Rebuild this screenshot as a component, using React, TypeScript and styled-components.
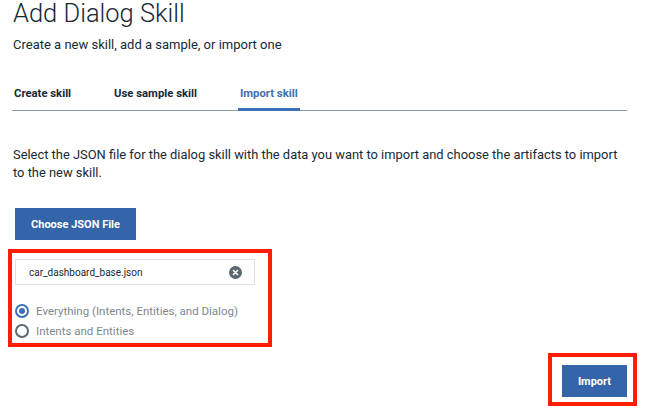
import React, { useState } from "react";
import styled, { createGlobalStyle } from "styled-components";

const Global = createGlobalStyle`
  html, body { margin: 0; padding: 0; background: #ffffff; }
  body { font-family: Roboto, "Liberation Sans", Arial, sans-serif; color: #152935; }
  * { box-sizing: border-box; }
`;

const Page = styled.div`
  width: 651px;
  padding: 0 14px 0 12px;
  display: flex;
  flex-direction: column;
`;

const Title = styled.h1`
  margin: 0 0 0 1px;
  font-size: 25.5px;
  line-height: 26px;
  font-weight: 300;
  color: #152935;
`;

const Subtitle = styled.p`
  margin: 10px 0 0 1px;
  font-size: 13px;
  line-height: 18px;
  color: #152935;
`;

const TabList = styled.div`
  margin: 32px 10px 0 0;
  display: flex;
  gap: 39px;
  box-shadow: inset 0 -1px 0 #8c9ba5;
`;

const Tab = styled.button<{ $active?: boolean }>`
  all: unset;
  cursor: pointer;
  padding: 0 2px 6px;
  font-size: 11.3px;
  line-height: 16px;
  font-weight: 700;
  color: ${(p) => (p.$active ? "#3d70b2" : "#152935")};
  border-bottom: 3px solid ${(p) => (p.$active ? "#3d70b2" : "transparent")};
`;

const Paragraph = styled.p`
  margin: 35px 10px 0 1px;
  font-size: 12.9px;
  line-height: 18px;
  color: #152935;
`;

const PrimaryButton = styled.button<{ $w: number }>`
  all: unset;
  cursor: pointer;
  width: ${(p) => p.$w}px;
  height: 32px;
  display: flex;
  align-items: center;
  justify-content: center;
  background: #3465a8;
  color: #ffffff;
  font-size: 11px;
  font-weight: 700;
`;

const ChooseRow = styled.div`
  margin: 26px 0 0 3px;
  display: flex;
`;

const Highlight = styled.div`
  border: 4px solid #ff1f00;
`;

const FileBox = styled(Highlight)`
  margin: 9px 0 0 -4px;
  width: 264px;
  padding: 6px 0 2px 3px;
  display: flex;
  flex-direction: column;
`;

const FileField = styled.div`
  width: 240px;
  height: 26px;
  border: 1px solid #dfe3e6;
  display: flex;
  align-items: center;
  justify-content: space-between;
  padding: 0 12px 0 13px;
  font-size: 10px;
  color: #152935;
`;

const ClearIcon = styled.svg`
  width: 13px;
  height: 13px;
  display: block;
`;

const RadioGroup = styled.div`
  margin-top: 16px;
  display: flex;
  flex-direction: column;
`;

const RadioRow = styled.label`
  height: 20px;
  display: flex;
  align-items: center;
  gap: 7px;
  font-size: 11.5px;
  color: #7d8890;
  cursor: pointer;
`;

const RadioInput = styled.input`
  appearance: none;
  margin: 0;
  width: 14px;
  height: 14px;
  border-radius: 50%;
  border: 2px solid #5a6872;
  display: grid;
  place-items: center;
  &:checked {
    border-color: #3d70b2;
  }
  &:checked::after {
    content: "";
    width: 6px;
    height: 6px;
    border-radius: 50%;
    background: #3d70b2;
  }
`;

const Footer = styled.div`
  margin-top: 6px;
  display: flex;
  justify-content: flex-end;
`;

const ImportBox = styled(Highlight)`
  padding: 8px 6px 5px 10px;
`;

export default function App() {
  const [choice, setChoice] = useState("all");
  return (
    <Page>
      <Global />
      <Title>Add Dialog Skill</Title>
      <Subtitle>Create a new skill, add a sample, or import one</Subtitle>
      <TabList>
        <Tab>Create skill</Tab>
        <Tab>Use sample skill</Tab>
        <Tab $active>Import skill</Tab>
      </TabList>
      <Paragraph>
        Select the JSON file for the dialog skill with the data you want to import and choose the artifacts to import
        to the new skill.
      </Paragraph>
      <ChooseRow>
        <PrimaryButton $w={121}>Choose JSON File</PrimaryButton>
      </ChooseRow>
      <FileBox>
        <FileField>
          <span>car_dashboard_base.json</span>
          <ClearIcon viewBox="0 0 16 16">
            <circle cx="8" cy="8" r="8" fill="#5a6872" />
            <path d="M5.5 5.5l5 5M10.5 5.5l-5 5" stroke="#ffffff" strokeWidth="2" strokeLinecap="round" />
          </ClearIcon>
        </FileField>
        <RadioGroup>
          <RadioRow>
            <RadioInput type="radio" name="what" checked={choice === "all"} onChange={() => setChoice("all")} />
            Everything (Intents, Entities, and Dialog)
          </RadioRow>
          <RadioRow>
            <RadioInput type="radio" name="what" checked={choice === "ie"} onChange={() => setChoice("ie")} />
            Intents and Entities
          </RadioRow>
        </RadioGroup>
      </FileBox>
      <Footer>
        <ImportBox>
          <PrimaryButton $w={65}>Import</PrimaryButton>
        </ImportBox>
      </Footer>
    </Page>
  );
}
